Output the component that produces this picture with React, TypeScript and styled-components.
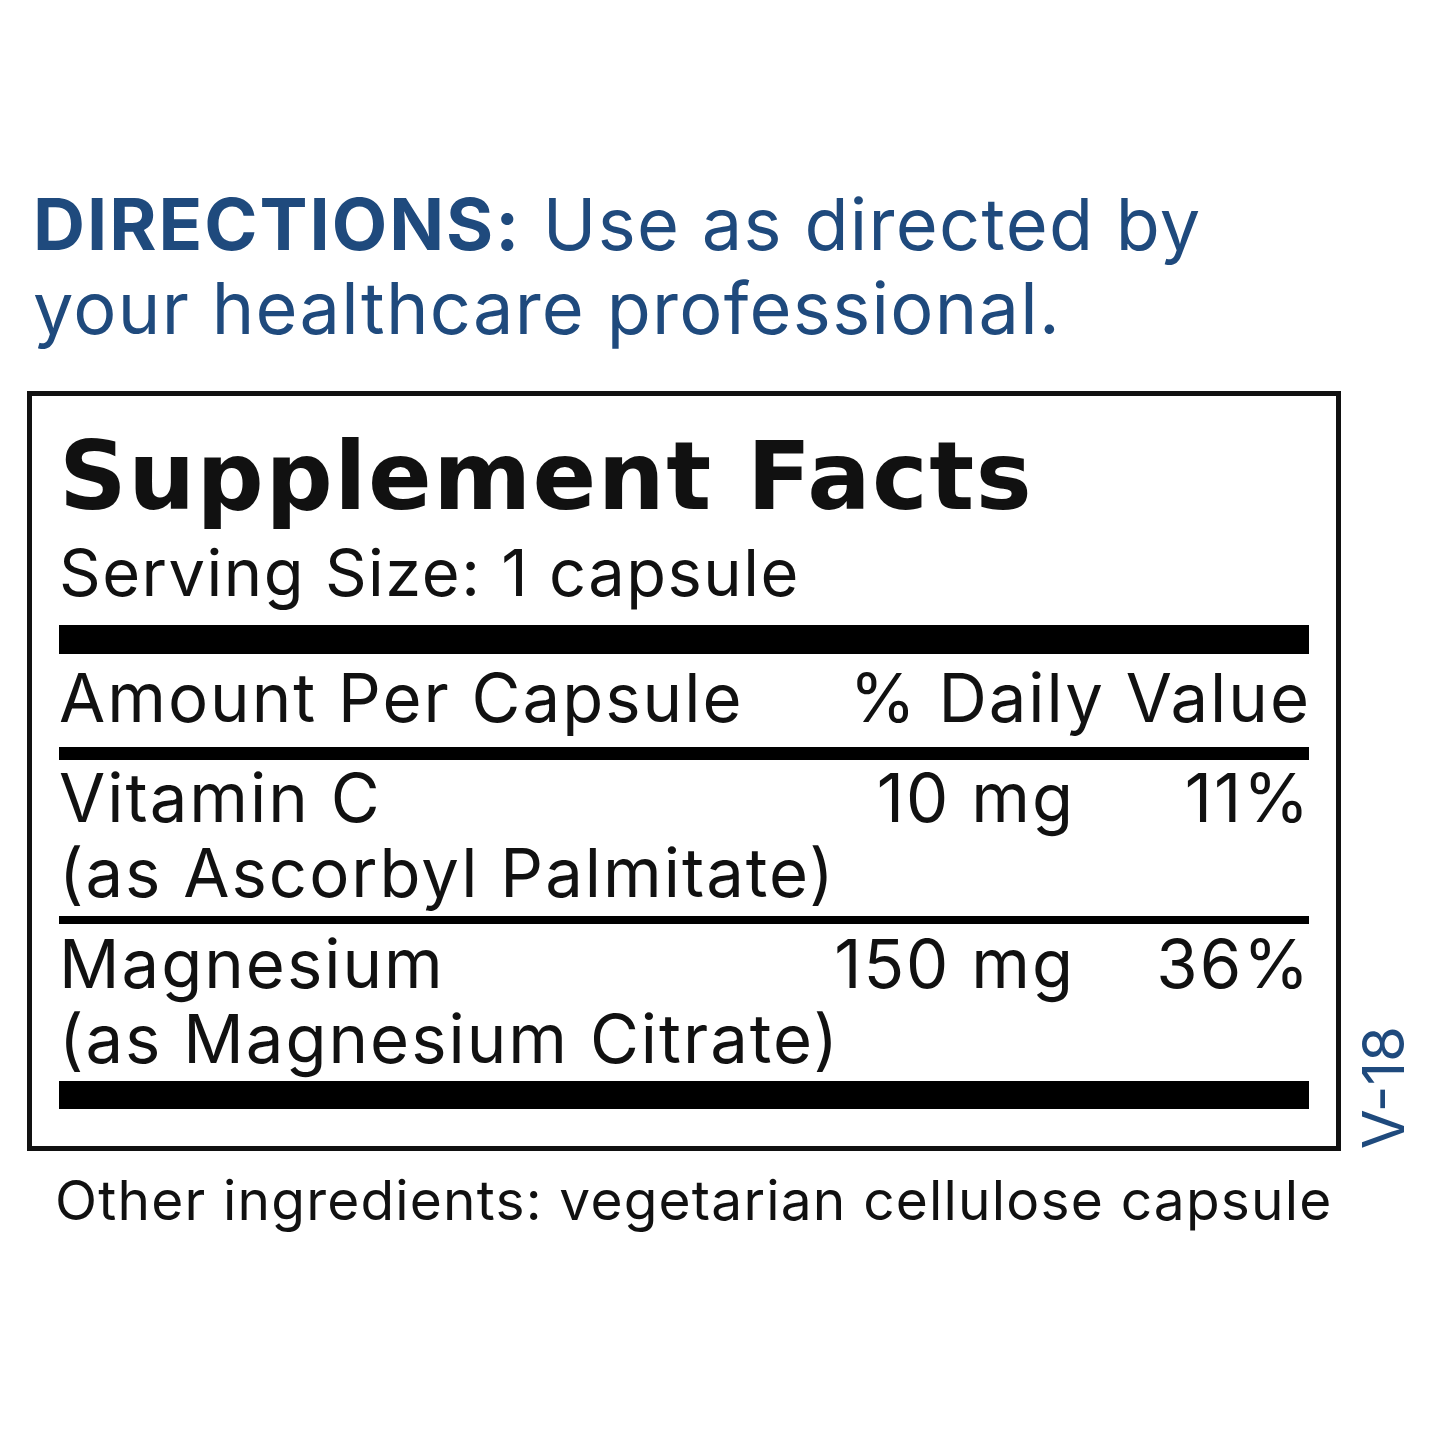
import styled, { createGlobalStyle } from 'styled-components';

const GlobalStyle = createGlobalStyle`
  html, body {
    margin: 0;
    padding: 0;
    background: #fff;
  }
  body {
    font-family: Inter, 'Liberation Sans', sans-serif;
    color: #111;
  }
`;

const Page = styled.div`
  width: 1445px;
  height: 1445px;
  padding-top: 182px;
  box-sizing: border-box;
`;

const Directions = styled.p`
  margin: 0 0 41px 33px;
  width: 1240px;
  font-size: 72px;
  line-height: 84px;
  letter-spacing: 1.3px;
  color: #1f4a7d;
`;

const Lead = styled.strong`
  font-weight: 700;
  letter-spacing: 2px;
`;

const LabelRow = styled.div`
  display: flex;
  align-items: flex-end;
  gap: 17px;
  margin-left: 27px;
`;

const FactsBox = styled.section`
  width: 1314px;
  box-sizing: border-box;
  border: 5px solid #111;
  padding: 31px 27px 37px;
`;

const Title = styled.h1`
  margin: 0;
  font-family: 'DejaVu Sans', Inter, sans-serif;
  font-size: 94px;
  line-height: 100px;
  font-weight: 700;
  letter-spacing: 1.5px;
`;

const Serving = styled.div`
  margin-top: 11px;
  font-size: 65px;
  line-height: 70px;
  letter-spacing: 1.5px;
`;

const Rule = styled.div<{ $h: number; $gap: number }>`
  height: ${(p) => p.$h}px;
  margin-top: ${(p) => p.$gap}px;
  background: #000;
`;

const HeadRow = styled.div`
  display: flex;
  justify-content: space-between;
  margin-top: 8px;
  margin-right: -2px;
  font-size: 67px;
  line-height: 72px;
  letter-spacing: 2px;
`;

const Ingredient = styled.div<{ $gap: number }>`
  display: grid;
  grid-template-columns: 1fr auto 236px;
  margin-top: ${(p) => p.$gap}px;
  margin-right: -2px;
  font-size: 67px;
  line-height: 75px;
  letter-spacing: 2px;
`;

const Amount = styled.span`
  text-align: right;
`;

const Source = styled.span`
  grid-column: 1 / -1;
`;

const Version = styled.div`
  writing-mode: vertical-rl;
  transform: rotate(180deg);
  font-size: 58px;
  line-height: 50px;
  color: #1f4a7d;
  margin-bottom: 2px;
`;

const Other = styled.p`
  margin: 19px 0 0 55px;
  font-size: 55px;
  line-height: 60px;
  letter-spacing: 1.2px;
`;

interface IRow {
  name: string;
  source: string;
  amount: string;
  dv: string;
}

const rows: IRow[] = [
  { name: 'Vitamin C', source: '(as Ascorbyl Palmitate)', amount: '10 mg', dv: '11%' },
  { name: 'Magnesium', source: '(as Magnesium Citrate)', amount: '150 mg', dv: '36%' },
];

const App = () => {
  return (
    <>
      <GlobalStyle />
      <Page>
        <Directions>
          <Lead>DIRECTIONS:</Lead> Use as directed by your healthcare professional.
        </Directions>
        <LabelRow>
          <FactsBox>
            <Title>Supplement Facts</Title>
            <Serving>Serving Size: 1 capsule</Serving>
            <Rule $h={29} $gap={17} />
            <HeadRow>
              <span>Amount Per Capsule</span>
              <span>% Daily Value</span>
            </HeadRow>
            <Rule $h={13} $gap={13} />
            {rows.map((row, i) => (
              <div key={row.name}>
                {i > 0 && <Rule $h={8} $gap={6} />}
                <Ingredient $gap={i > 0 ? 2 : 0}>
                  <span>{row.name}</span>
                  <Amount>{row.amount}</Amount>
                  <Amount>{row.dv}</Amount>
                  <Source>{row.source}</Source>
                </Ingredient>
              </div>
            ))}
            <Rule $h={28} $gap={5} />
          </FactsBox>
          <Version>V-18</Version>
        </LabelRow>
        <Other>Other ingredients: vegetarian cellulose capsule</Other>
      </Page>
    </>
  );
};

export default App;
